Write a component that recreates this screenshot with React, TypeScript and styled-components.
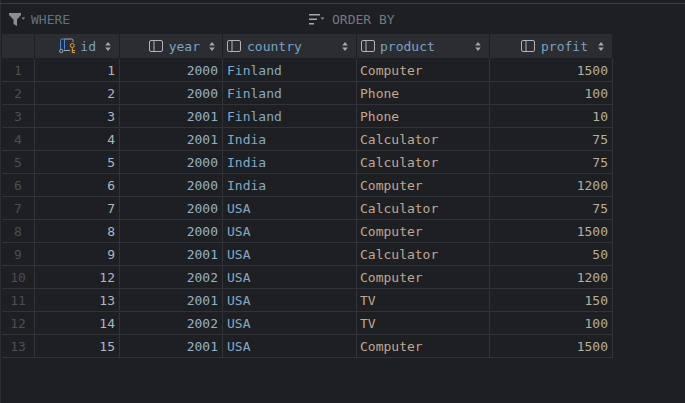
import React from "react";
import styled, { createGlobalStyle } from "styled-components";

const Global = createGlobalStyle`
  html, body { margin: 0; padding: 0; background: #1e1f22; }
  body { width: 685px; height: 403px; overflow: hidden; font-family: "DejaVu Sans Mono", "Liberation Mono", monospace; }
`;
const Page = styled.div`
  width: 685px; height: 403px; box-sizing: border-box;
  background: #1e1f22; border-left: 1px solid #2b2d30; padding-left: 1px;
  display: flex; flex-direction: column;
`;
const TopLine = styled.div`height: 1px; margin-top: 3px; margin-left: -2px; background: #393b40;`;
const FilterBar = styled.div`
  height: 30px; display: grid; grid-template-columns: 306px 1fr; align-items: center;
`;
const FilterItem = styled.div<{ $pad: number; $gap: number; $color: string }>`
  display: flex; align-items: center; gap: ${p => p.$gap}px; padding-left: ${p => p.$pad}px;
  font-size: 13px; color: ${p => p.$color};
`;
const Grid = styled.div`
  display: grid; grid-template-columns: 33px 85px 103px 134px 133px 123px;
  width: 611px;
  font-size: 13px;
`;
const HeadCell = styled.div<{ $right?: boolean; $end?: number }>`
  height: 24px; background: #2b2d30; color: #7ba3c6; display: flex; align-items: center;
  justify-content: ${p => (p.$right ? "flex-end" : "flex-start")};
  padding: 0 ${p => p.$end ?? 8}px 0 4px; box-sizing: border-box;
  border-right: 1px solid #1e1f22; margin-bottom: 1px;
`;
const HeadLabel = styled.span<{ $before?: number; $after?: number }>`
  margin-left: ${p => p.$before ?? 6}px; margin-right: ${p => p.$after ?? 9}px; line-height: 25px;
`;
const Spacer = styled.div`flex: 1;`;
const Cell = styled.div<{ $tone: string; $right?: boolean; $start?: number }>`
  height: 23px; box-sizing: border-box; line-height: 24px; padding: 0 4px 0 ${p => p.$start ?? 3}px;
  border-right: 1px solid #313338; border-bottom: 1px solid #313338;
  color: ${p => p.$tone}; text-align: ${p => (p.$right ? "right" : "left")};
  white-space: nowrap; overflow: hidden;
`;
const IndexCell = styled(Cell)`
  text-align: center; padding: 0;
`;

const Funnel = () => (
  <svg width="16" height="13" viewBox="0 0 16 13" style={{flex: "none"}}><path d="M0 0h12v2L8 6.500V13L4.500 11V6.500L0 2z" fill="#8a8e94"/><path d="M12.500 4.500h3.500l-1.750 2.200z" fill="#8a8e94"/></svg>
);
const Sort = () => (
  <svg width="16" height="11" viewBox="0 0 16 11" style={{flex: "none"}}><path d="M0 0h11v1.600H0zM0 4.500h8v1.600H0zM0 9h5v1.600H0z" fill="#a4a7ac"/><path d="M11.500 3.500h4l-2 2.200z" fill="#8a8e94"/></svg>
);
const ColIcon = () => (
  <svg width="14" height="12" viewBox="0 0 14 12" style={{flex: "none"}}><rect x=".5" y=".5" width="13" height="11" rx="1.500" fill="none" stroke="#b0b3b8"/><path d="M5 .5v11" stroke="#b0b3b8"/></svg>
);
const KeyIcon = () => (
  <svg width="17" height="16" viewBox="0 0 17 16" style={{flex: "none", marginRight: -2}}>
    <path d="M1.500 11V2.500a1.500 1.500 0 0 1 1.500-1.500h2.500v10.500" fill="none" stroke="#4a87d8"/>
    <path d="M5.500 1h7a1.500 1.500 0 0 1 1.500 1.500v1.500M5 12.500h6" fill="none" stroke="#a8abb0"/>
    <circle cx="2.300" cy="13" r="1.700" fill="none" stroke="#a8abb0"/>
    <circle cx="13.300" cy="7.500" r="2" fill="none" stroke="#d9a343"/>
    <path d="M13.300 9.500v5.500M13.300 12.500h2.700M13.300 14.500h2.700" stroke="#d9a343"/>
  </svg>
);
const SortArrows = () => (
  <svg width="6" height="9" viewBox="0 0 6 9" style={{flex: "none"}}><path d="M3 0L5.800 3.400H.2zM3 9L.2 5.600h5.600z" fill="#a4a7ac"/></svg>
);

const rows: [string, string, string, string, string][] = [
  ["1","2000","Finland","Computer","1500"],
  ["2","2000","Finland","Phone","100"],
  ["3","2001","Finland","Phone","10"],
  ["4","2001","India","Calculator","75"],
  ["5","2000","India","Calculator","75"],
  ["6","2000","India","Computer","1200"],
  ["7","2000","USA","Calculator","75"],
  ["8","2000","USA","Computer","1500"],
  ["9","2001","USA","Calculator","50"],
  ["12","2002","USA","Computer","1200"],
  ["13","2001","USA","TV","150"],
  ["14","2002","USA","TV","100"],
  ["15","2001","USA","Computer","1500"],
];
const NUM = "#a9b7c6";
const YEAR = "#94b1cc";
const STR = "#84a8c8";
const PROD = "#c0a892";
const PROF = "#b5ae9c";

export default function App() {
  return (
    <Page>
      <Global />
      <TopLine />
      <FilterBar>
        <FilterItem $pad={7} $gap={6} $color="#5d7385"><Funnel />WHERE</FilterItem>
        <FilterItem $pad={1} $gap={7} $color="#74787e"><Sort />ORDER BY</FilterItem>
      </FilterBar>
      <Grid>
        <HeadCell />
        <HeadCell $right><KeyIcon /><HeadLabel>id</HeadLabel><SortArrows /></HeadCell>
        <HeadCell $right $end={7}><ColIcon /><HeadLabel>year</HeadLabel><SortArrows /></HeadCell>
        <HeadCell><ColIcon /><HeadLabel>country</HeadLabel><Spacer /><SortArrows /></HeadCell>
        <HeadCell><ColIcon /><HeadLabel $before={5}>product</HeadLabel><Spacer /><SortArrows /></HeadCell>
        <HeadCell $right><ColIcon /><HeadLabel $after={10}>profit</HeadLabel><SortArrows /></HeadCell>
        {rows.map((r, i) => (
          <React.Fragment key={i}>
            <IndexCell $tone="#4b4e54">{i + 1}</IndexCell>
            <Cell $tone={NUM} $right>{r[0]}</Cell>
            <Cell $tone={YEAR} $right>{r[1]}</Cell>
            <Cell $tone={STR} $start={4}>{r[2]}</Cell>
            <Cell $tone={PROD}>{r[3]}</Cell>
            <Cell $tone={PROF} $right>{r[4]}</Cell>
          </React.Fragment>
        ))}
      </Grid>
    </Page>
  );
}
